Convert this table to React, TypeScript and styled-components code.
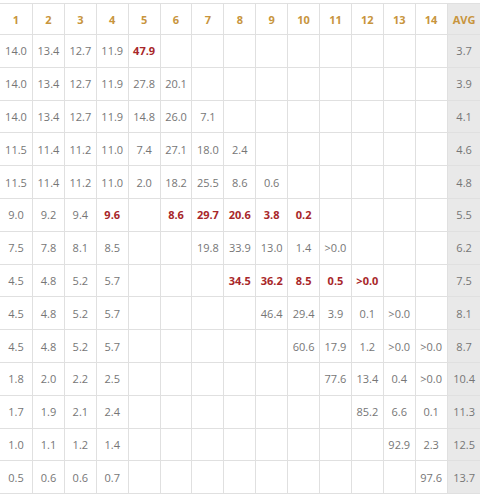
import React from "react";
import styled, { createGlobalStyle } from "styled-components";

const GlobalStyle = createGlobalStyle`
  html, body {
    margin: 0;
    padding: 0;
    background: #fff;
    overflow: hidden;
  }
  body {
    font-family: "Open Sans", "Liberation Sans", sans-serif;
  }
`;

const Sheet = styled.div`
  display: grid;
  grid-template-columns: 32px repeat(13, 30.9px) 33px;
  grid-template-rows: 30px repeat(14, 31.8px);
  gap: 1px;
  width: max-content;
  margin-top: 3px;
  padding: 1px 0;
  background: #e0e0e0;
`;

const HeadCell = styled.div<{ $avg?: boolean }>`
  display: flex;
  align-items: center;
  justify-content: center;
  background: ${(p) => (p.$avg ? "#e9e9e9" : "#fff")};
  color: #c8953d;
  font-size: 11px;
  font-weight: 700;
`;

const Cell = styled.div<{ $avg?: boolean; $hot?: boolean }>`
  display: flex;
  align-items: center;
  justify-content: center;
  background: ${(p) => (p.$avg ? "#e9e9e9" : "#fff")};
  color: ${(p) => (p.$hot ? "#a8272a" : "#767676")};
  font-size: 11px;
  font-weight: ${(p) => (p.$hot ? 700 : 400)};
`;

// "*" prefix marks a highlighted (bold red) value, "" is an empty cell
const rows: { cells: string[]; avg: string }[] = [
  { cells: ["14.0", "13.4", "12.7", "11.9", "*47.9"], avg: "3.7" },
  { cells: ["14.0", "13.4", "12.7", "11.9", "27.8", "20.1"], avg: "3.9" },
  { cells: ["14.0", "13.4", "12.7", "11.9", "14.8", "26.0", "7.1"], avg: "4.1" },
  { cells: ["11.5", "11.4", "11.2", "11.0", "7.4", "27.1", "18.0", "2.4"], avg: "4.6" },
  { cells: ["11.5", "11.4", "11.2", "11.0", "2.0", "18.2", "25.5", "8.6", "0.6"], avg: "4.8" },
  { cells: ["9.0", "9.2", "9.4", "*9.6", "", "*8.6", "*29.7", "*20.6", "*3.8", "*0.2"], avg: "5.5" },
  { cells: ["7.5", "7.8", "8.1", "8.5", "", "", "19.8", "33.9", "13.0", "1.4", ">0.0"], avg: "6.2" },
  { cells: ["4.5", "4.8", "5.2", "5.7", "", "", "", "*34.5", "*36.2", "*8.5", "*0.5", "*>0.0"], avg: "7.5" },
  { cells: ["4.5", "4.8", "5.2", "5.7", "", "", "", "", "46.4", "29.4", "3.9", "0.1", ">0.0"], avg: "8.1" },
  { cells: ["4.5", "4.8", "5.2", "5.7", "", "", "", "", "", "60.6", "17.9", "1.2", ">0.0", ">0.0"], avg: "8.7" },
  { cells: ["1.8", "2.0", "2.2", "2.5", "", "", "", "", "", "", "77.6", "13.4", "0.4", ">0.0"], avg: "10.4" },
  { cells: ["1.7", "1.9", "2.1", "2.4", "", "", "", "", "", "", "", "85.2", "6.6", "0.1"], avg: "11.3" },
  { cells: ["1.0", "1.1", "1.2", "1.4", "", "", "", "", "", "", "", "", "92.9", "2.3"], avg: "12.5" },
  { cells: ["0.5", "0.6", "0.6", "0.7", "", "", "", "", "", "", "", "", "", "97.6"], avg: "13.7" },
];

const columns = Array.from({ length: 14 }, (_, i) => String(i + 1));

export default function App() {
  return (
    <>
      <GlobalStyle />
      <Sheet>
        {columns.map((c) => (
          <HeadCell key={c}>{c}</HeadCell>
        ))}
        <HeadCell $avg>AVG</HeadCell>
        {rows.map((row, r) => (
          <React.Fragment key={r}>
            {columns.map((_, i) => {
              const raw = row.cells[i] ?? "";
              const hot = raw.startsWith("*");
              return (
                <Cell key={i} $hot={hot}>
                  {hot ? raw.slice(1) : raw}
                </Cell>
              );
            })}
            <Cell $avg>{row.avg}</Cell>
          </React.Fragment>
        ))}
      </Sheet>
    </>
  );
}
